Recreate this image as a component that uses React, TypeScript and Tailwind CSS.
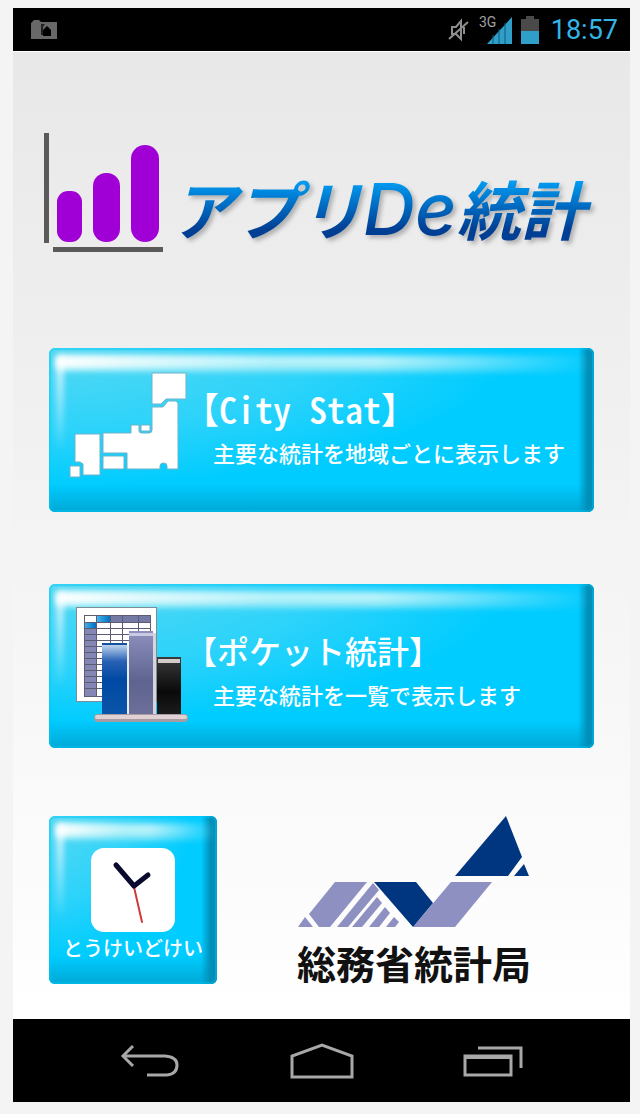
import React from "react";

function Gloss() {
  return (
    <span aria-hidden="true" className="absolute inset-0 pointer-events-none">
      <span className="absolute inset-0 bg-[radial-gradient(ellipse_at_top_left,#55d8f2_0%,#2dd3fa_35%,transparent_60%)]" />
      <span className="absolute inset-x-0 bottom-0 h-7 bg-linear-to-b from-transparent to-[#00a8d6]" />
      <span className="absolute right-0 inset-y-0 w-4 bg-linear-to-r from-transparent to-[#008fb8] to-60%" />
      <span className="absolute inset-x-0 top-0 h-9 mask-r-from-60% mask-r-to-100%">
        <span className="absolute left-2 right-0 top-2 h-4 rounded-sm bg-linear-to-b from-[#d8fafc] to-[#7be4f6] blur-[3px]" />
        <span className="absolute left-2 top-2 h-3 w-2/5 bg-linear-to-r from-white to-transparent blur-[3px]" />
      </span>
      <span className="absolute left-2 top-2 h-24 w-1.5 rounded-full bg-linear-to-b from-white to-transparent blur-[3px]" />
      <span className="absolute inset-0 rounded-md border-2 border-[#00c8f8]/40" />
    </span>
  );
}

function JapanMap() {
  return (
    <svg viewBox="0 0 120 120" className="h-30 w-30 shrink-0" fill="#fff" stroke="#6cb4c8" strokeWidth="1" aria-hidden="true">
      <path d="M83 3H117V29H97L92 34H83Z" />
      <path d="M83 37H94L99 31H107L109 33V99H98V96Q98 93 94.500 93Q91 93 91 96V99H58V83H34V63H62V55H70V61Q70 63 73 63H80Q83 63 83 60Z" />
      <rect x="72" y="55" width="9" height="6" />
      <rect x="34" y="86" width="21" height="13" />
      <path d="M6 64H31V105H14V94L11 92H6Z" />
      <rect x="1" y="96" width="10" height="11" />
    </svg>
  );
}

const GRID_ROWS = [16, 22, 28, 34, 40, 46, 52, 58, 64, 70, 76, 82];

function TableChart() {
  return (
    <svg viewBox="0 0 120 120" className="h-30 w-30 shrink-0" aria-hidden="true">
      <defs>
        <linearGradient id="barBlue" x1="0" y1="0" x2="0" y2="1">
          <stop offset="0" stopColor="#cfe2f5" />
          <stop offset="0.25" stopColor="#2a62b4" />
          <stop offset="0.5" stopColor="#0049a4" />
          <stop offset="1" stopColor="#0a55a8" />
        </linearGradient>
        <linearGradient id="barGrey" x1="0" y1="0" x2="0" y2="1">
          <stop offset="0" stopColor="#8f90bd" />
          <stop offset="0.6" stopColor="#5d648f" />
          <stop offset="1" stopColor="#6d6f99" />
        </linearGradient>
        <linearGradient id="barBlack" x1="0" y1="0" x2="0" y2="1">
          <stop offset="0" stopColor="#3a3a3a" />
          <stop offset="0.6" stopColor="#0a0a0a" />
          <stop offset="1" stopColor="#1c1c1c" />
        </linearGradient>
        <linearGradient id="cellBlue">
          <stop offset="0" stopColor="#45b4ee" />
          <stop offset="1" stopColor="#0070c0" />
        </linearGradient>
      </defs>
      <rect x="7.500" y="1.500" width="80" height="94" fill="#fff" stroke="#7d8c96" />
      <rect x="15" y="9" width="67" height="82" fill="#fff" />
      <rect x="15" y="9" width="67" height="7" fill="#7579a6" />
      <rect x="15" y="16" width="12" height="75" fill="#8487b5" />
      <rect x="15" y="9" width="13" height="7" fill="#fff" />
      <rect x="28" y="9" width="13" height="7" fill="url(#cellBlue)" />
      <rect x="15" y="16" width="12" height="7" fill="url(#cellBlue)" />
      <g stroke="#5c5c72" strokeWidth="1">
        {GRID_ROWS.map((y) => (
          <path key={y} d={`M15 ${y}.5H82`} />
        ))}
        <path d="M27.500 9V91M41.500 9V91M53.500 9V91M69.500 9V91" />
        <rect x="15.500" y="9.500" width="66" height="81" fill="none" />
      </g>
      <rect x="33" y="37" width="25" height="72" fill="url(#barBlue)" />
      <rect x="33" y="37" width="25" height="2" fill="#1450a0" />
      <rect x="58" y="39" width="2" height="70" fill="#e8ecf4" />
      <rect x="60" y="25" width="24" height="84" fill="url(#barGrey)" />
      <rect x="60" y="27" width="24" height="3" fill="#c9c9e4" />
      <rect x="84" y="27" width="3" height="82" fill="#d6d4dc" />
      <rect x="88" y="51" width="24" height="58" fill="url(#barBlack)" />
      <rect x="89" y="53" width="22" height="4" fill="#d4cccc" />
      <rect x="25" y="108" width="94" height="8" rx="4" fill="#a89ca2" />
      <rect x="26" y="109" width="92" height="4" rx="2" fill="#e0d2d4" />
    </svg>
  );
}

function ClockFace() {
  return (
    <svg viewBox="0 0 84 84" className="relative h-21 w-21" fill="none" aria-hidden="true">
      <rect width="84" height="84" rx="13" fill="#fff" />
      <path d="M43 39L51 74" stroke="#d03a3a" strokeWidth="2" strokeLinecap="round" />
      <path d="M25 17L43 38L57 27" stroke="#0a0a2c" strokeWidth="5" strokeLinecap="round" strokeLinejoin="round" />
    </svg>
  );
}

function BureauMark() {
  return (
    <svg viewBox="0 0 232 112" className="h-28 w-58" aria-hidden="true">
      <g fill="#8e90c2">
        <path d="M37 66H69L32 111H21L11 98Z" />
        <path d="M7 101L15 111H0Z" />
        <path d="M75 67L81 74L50 111H39Z" />
        <path d="M79 81L84 87L64 111H54Z" />
        <path d="M87 91L92 97L81 111H71Z" />
        <path d="M96 101L101 106L97 111H88Z" />
        <path d="M153 66H194L157 111H115Z" />
      </g>
      <g fill="#003580">
        <path d="M76 66H118L135 87L115 111Z" />
        <path d="M208 0L224 41L210 60H157Z" />
        <path d="M226 48L231 60H216Z" />
      </g>
    </svg>
  );
}

interface MenuButtonProps {
  icon: React.ReactNode;
  title: string;
  titleClass: string;
  description: string;
}

function MenuButton({ icon, title, titleClass, description }: MenuButtonProps) {
  return (
    <button type="button" className="relative flex h-41 w-full items-center gap-3 overflow-hidden rounded-md bg-[#00ccff] pl-5 text-left text-white">
      <Gloss />
      <span className="relative">{icon}</span>
      <span className={`relative flex flex-col gap-1 font-medium whitespace-nowrap ${titleClass}`}>
        <span className="leading-10 [font-feature-settings:'hwid','halt']">{title}</span>
        <span className="ml-3 text-[22px] leading-10">{description}</span>
      </span>
    </button>
  );
}

function StatusBar() {
  return (
    <header className="flex h-11 items-center border-b border-white bg-black pr-3 pl-4">
      <svg viewBox="0 0 30 22" className="h-5.5 w-7.5" aria-hidden="true">
        <path d="M2 4L5 1H10L12 3H28V20H2Z" fill="#686868" />
        <path d="M12 5H16L14 8V16H12Z" fill="#222" />
        <path d="M14 17V11L18 7L22 11V17Z" fill="#000" />
      </svg>
      <div className="ml-auto flex items-center gap-2">
        <svg viewBox="0 0 24 26" className="h-6.5 w-6" fill="none" stroke="#8e8e8e" strokeWidth="2" aria-hidden="true">
          <path d="M5 10H9L14 4V22L9 17H5Z" />
          <path d="M2 22L21 5M17 10V17" />
        </svg>
        <svg viewBox="0 0 34 30" className="h-7.5 w-8.5" aria-hidden="true">
          <text x="0" y="12" fontSize="14" fill="#a0a0a0" fontFamily="Roboto, sans-serif">3G</text>
          <path d="M8 29L33 2V29Z" fill="#2f9fc9" />
          <path d="M14 20V29M20 14V29M26 8V29" stroke="#15597a" strokeWidth="1" />
        </svg>
        <svg viewBox="0 0 18 28" className="h-7 w-4.5" aria-hidden="true">
          <path d="M0 3H5V0H13V3H18V15H0Z" fill="#4a4a4a" />
          <path d="M0 15H18V28H0Z" fill="#2f9fc9" />
        </svg>
        <time className="ml-1 font-[Roboto,sans-serif] text-[27px] leading-8 text-[#33b5e5]">18:57</time>
      </div>
    </header>
  );
}

function NavBar() {
  const button = "flex h-12 w-16 items-center justify-center";
  return (
    <nav className="flex h-21 items-center justify-center gap-27 border-t border-white bg-black text-[#a8a8a8]">
      <button type="button" aria-label="Back" className={button}>
        <svg viewBox="0 0 62 34" className="h-8.5 w-15.5" fill="none" stroke="currentColor" strokeWidth="3">
          <path d="M14 2L4 12L14 22" />
          <path d="M5 12H46Q58 13 58 21Q58 30 48 31H28" />
        </svg>
      </button>
      <button type="button" aria-label="Home" className={button}>
        <svg viewBox="0 0 64 36" className="h-9 w-16" fill="none" stroke="currentColor" strokeWidth="3">
          <path d="M2 34V13L32 2L62 13V34Z" />
        </svg>
      </button>
      <button type="button" aria-label="Recent apps" className={button}>
        <svg viewBox="0 0 62 34" className="h-8.5 w-15.5" fill="none" stroke="currentColor" strokeWidth="3">
          <path d="M2 12H48V31H2Z" />
          <path d="M2 13H48" strokeWidth="4" />
          <path d="M15 4H58V24" />
        </svg>
      </button>
    </nav>
  );
}

export default function App() {
  return (
    <div className="flex min-h-screen flex-col bg-[#f4f4f4] pt-2 pr-2.5 pb-3 pl-[13px] font-['Noto_Sans_CJK_JP',sans-serif]">
      <StatusBar />

      <main className="flex flex-1 flex-col bg-linear-to-b from-[#e8e8e8] to-white px-9 pt-20 pb-8">
        <h1 className="-ml-1.5 flex h-30 items-center gap-2 whitespace-nowrap">
          <svg viewBox="0 0 120 120" className="h-30 w-30 shrink-0" aria-hidden="true">
            <path d="M3.500 1V111M10 117.500H120" stroke="#5a5a5a" strokeWidth="5" />
            <g fill="#a000d6">
              <rect x="14" y="59" width="25" height="51" rx="11" />
              <rect x="50" y="41" width="27" height="69" rx="13" />
              <rect x="88" y="13" width="28" height="97" rx="14" />
            </g>
          </svg>
          <span className="pt-4 drop-shadow-[3px_3px_2px_rgba(0,0,0,0.25)]">
            <span className="flex items-baseline bg-linear-to-b from-[#00a8ff] from-25% to-[#003f94] to-80% bg-clip-text pt-4 pr-4 text-[64px] leading-20 font-bold text-transparent italic">
              アプリ
              <span className="font-[Inter,sans-serif] text-[72px] font-medium">De</span>
              統計
            </span>
          </span>
        </h1>

        {/* Main menu */}
        <div className="mt-24 flex flex-col gap-18">
          <MenuButton
            icon={<JapanMap />}
            title="【City Stat】"
            titleClass="text-[36px]"
            description="主要な統計を地域ごとに表示します"
          />
          <MenuButton
            icon={<TableChart />}
            title="【ポケット統計】"
            titleClass="pt-3 text-[32px]"
            description="主要な統計を一覧で表示します"
          />
        </div>

        <div className="mt-17 flex items-end gap-20">
          <button type="button" className="relative flex h-42 w-42 shrink-0 flex-col items-center overflow-hidden rounded-md bg-[#00ccff] pt-8 text-white">
            <Gloss />
            <ClockFace />
            <span className="relative text-[20px] leading-8 font-medium whitespace-nowrap">とうけいどけい</span>
          </button>
          <div className="flex flex-col items-center">
            <BureauMark />
            <span className="mt-3 text-[39px] leading-11 font-bold whitespace-nowrap text-[#111]">総務省統計局</span>
          </div>
        </div>
      </main>

      <NavBar />
    </div>
  );
}
